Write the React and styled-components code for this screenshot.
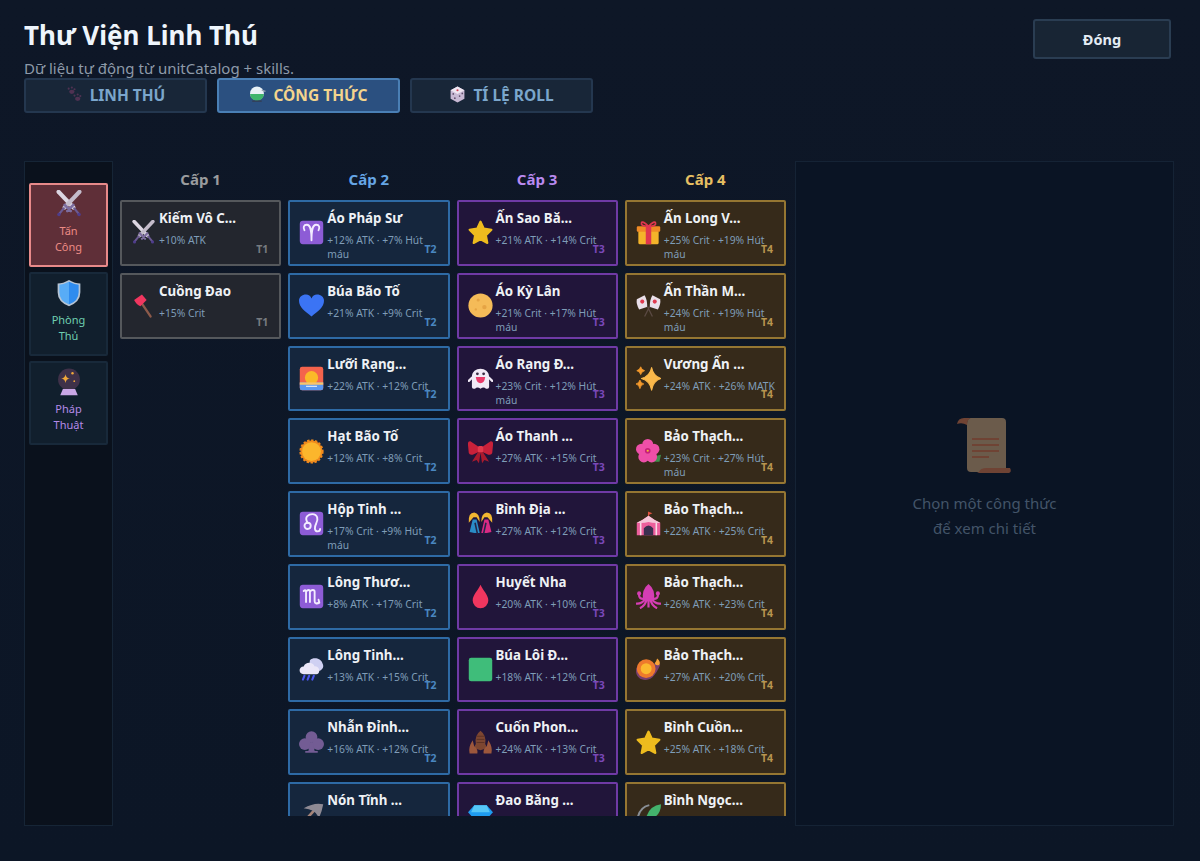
import React from "react";
import styled, { createGlobalStyle } from "styled-components";

const GlobalStyle = createGlobalStyle`
  html, body {
    margin: 0;
    height: 100%;
    background: #0d1626;
    font-family: "Noto Sans", "Open Sans", "Liberation Sans", sans-serif;
  }
  * { box-sizing: border-box; }
`;

const Page = styled.div`
  width: 1200px;
  height: 861px;
  padding: 18px 26px 35px 24px;
  display: flex;
  flex-direction: column;
  overflow: hidden;
  background: linear-gradient(180deg, #0e1727 0%, #0c1626 100%);
`;

const Header = styled.header`
  display: flex;
  justify-content: space-between;
  align-items: flex-start;
  padding-right: 3px;
`;

const Title = styled.h1`
  margin: 0;
  font-size: 26px;
  line-height: 34px;
  font-weight: 700;
  color: #eef5fc;
`;

const Subtitle = styled.p`
  margin: 6px 0 0;
  font-size: 15px;
  line-height: 20px;
  color: #8d9aa9;
`;

const CloseButton = styled.button`
  width: 138px;
  height: 40px;
  margin-top: 1px;
  padding-bottom: 2px;
  border: 2px solid #2a3d52;
  border-radius: 3px;
  background: #182534;
  color: #e4ecf4;
  font: 700 14.5px "Noto Sans", sans-serif;
`;

const Tabs = styled.nav`
  display: flex;
  gap: 10px;
`;

const Tab = styled.button`
  width: 183px;
  height: 35px;
  padding: 0 0 2px;
  display: flex;
  align-items: center;
  justify-content: center;
  gap: 7px;
  border: 2px solid ${(p) => (p.$active ? "#4a7fb5" : "#24374f")};
  border-radius: 3px;
  background: ${(p) => (p.$active ? "#2b5080" : "#182638")};
  color: ${(p) => (p.$active ? "#f4d58d" : "#7ba6cc")};
  font: 700 15.5px "Noto Sans", sans-serif;
  svg { width: 17px; height: 17px; }
`;

const Body = styled.main`
  flex: 1;
  min-height: 0;
  margin-top: 48px;
  display: flex;
  gap: 7px;
`;

const Sidebar = styled.aside`
  flex: 0 0 89px;
  display: flex;
  flex-direction: column;
  gap: 5.5px;
  padding: 21px 4px 0;
  border: 1px solid #162536;
  background: #0a111c;
`;

const SideItem = styled.button`
  height: 83.5px;
  padding: 5px 0 0;
  display: flex;
  flex-direction: column;
  align-items: center;
  border: 2px solid ${(p) => (p.$active ? "#e88a8a" : "#18293a")};
  border-radius: 2px;
  background: ${(p) => (p.$active ? "#5f2f38" : "#111f2d")};
  color: ${(p) => p.$color};
  font: 400 11px/16px "Noto Sans", sans-serif;
  svg { width: 28px; height: 28px; flex: none; }
  span { display: block; max-width: 44px; margin-top: 5px; }
`;

const Grid = styled.section`
  flex: 0 0 668px;
  display: grid;
  grid-template-columns: repeat(4, 161.25px);
  column-gap: 7px;
  height: 655px;
  overflow: hidden;
`;

const Column = styled.div`
  display: flex;
  flex-direction: column;
  gap: 7px;
`;

const ColumnTitle = styled.h3`
  margin: 0;
  height: 32px;
  padding-top: 7px;
  text-align: center;
  font-size: 15px;
  line-height: 22px;
  font-weight: 700;
  color: ${(p) => p.$color};
`;

const tiers = {
  1: { bg: "#23262e", border: "#55585c", badge: "#777b80", head: "#9a9c9e" },
  2: { bg: "#15263d", border: "#2e6aa5", badge: "#4a87c0", head: "#66a6e6" },
  3: { bg: "#21153a", border: "#6f3aa5", badge: "#7a48b8", head: "#b98af0" },
  4: { bg: "#362a1a", border: "#957632", badge: "#b8954f", head: "#e6bf62" },
};

const Card = styled.article`
  position: relative;
  flex: none;
  height: 65.75px;
  display: flex;
  align-items: center;
  gap: 3px;
  padding: 0 7px 0 9px;
  border: 2px solid ${(p) => tiers[p.$tier].border};
  border-radius: 2px;
  background: ${(p) => tiers[p.$tier].bg};
  svg { width: 25px; height: 25px; flex: none; }
`;

const CardText = styled.div`
  flex: 1;
  align-self: flex-start;
  padding-top: 6px;
  min-width: 0;
`;

const CardName = styled.div`
  font-size: 13.3px;
  line-height: 20px;
  font-weight: 700;
  color: #eef1f5;
  white-space: nowrap;
`;

const CardStat = styled.div`
  margin-top: 5px;
  font-size: 10.3px;
  line-height: 14px;
  color: #7f9db8;
`;

const Badge = styled.span`
  position: absolute;
  right: 11px;
  bottom: 8px;
  font-size: 10.5px;
  line-height: 14px;
  font-weight: 700;
  color: ${(p) => tiers[p.$tier].badge};
`;

const Detail = styled.aside`
  flex: 1;
  display: flex;
  flex-direction: column;
  align-items: center;
  padding-top: 255px;
  border: 1px solid #152335;
  background: #0a1424;
  svg { width: 56px; height: 60px; }
`;

const DetailHint = styled.p`
  margin: 14px 0 0;
  text-align: center;
  font-size: 15px;
  line-height: 25px;
  color: #435469;
`;

const Swords = () => (
  <svg viewBox="0 0 32 32">
    <g strokeLinecap="round" fill="none">
      <path d="M4 2 L21 20" stroke="#dcd6e2" strokeWidth="4.6" />
      <path d="M28 2 L11 20" stroke="#c4bccb" strokeWidth="4.6" />
      <path d="M22 21 L27 27 M10 21 L5 27" stroke="#6b5a92" strokeWidth="2.6" />
      <path d="M14 24 L21 17 M18 24 L11 17" stroke="#7d6d9f" strokeWidth="3" />
      <circle cx="27.5" cy="28" r="2" fill="#4f3d8c" />
      <circle cx="4.5" cy="28" r="2" fill="#4f3d8c" />
    </g>
  </svg>
);
const Axe = () => (
  <svg viewBox="0 0 32 32">
    <path d="M11 9 L25 30" stroke="#8d5a4a" strokeWidth="3" strokeLinecap="round" />
    <path d="M4 9 L14 2 L20 9 L12 17 Q7 15 4 9Z" fill="#f0365f" />
  </svg>
);
const Zodiac = ({ d, children }) => (
  <svg viewBox="0 0 32 32">
    <rect x="1" y="1" width="30" height="30" rx="4" fill="#8d5cd6" />
    <path d={d} fill="none" stroke="#f3ecff" strokeWidth="2.4" strokeLinecap="round" />
    {children}
  </svg>
);
const Aries = () => <Zodiac d="M16 26 C16 13 15 6 10 6 C6 6 5 10 7 13 M16 26 C16 13 17 6 22 6 C26 6 27 10 25 13" />;
const Leo = () => (
  <Zodiac d="M11 15 C6 7 13 4 17 4 C24 4 25 11 22 16 C20 20 19 26 24 26 C26 26 27 25 27 23">
    <circle cx="11" cy="19" r="4" fill="none" stroke="#f3ecff" strokeWidth="2.4" />
  </Zodiac>
);
const Scorpio = () => <Zodiac d="M6 9 C8 7 9 8 9 10 V23 M9 10 C11 7 14 7 14 10 V23 M14 10 C16 7 20 7 20 10 V22 C20 25 23 26 26 24 M26 24 L25 20 M26 24 L22 25" />;
const Heart = () => (
  <svg viewBox="0 0 32 32">
    <path d="M16 30 C8 24 0 18 0 10 C0 5 4 2 9 2 C12 2 15 4 16 7 C17 4 20 2 23 2 C28 2 32 5 32 10 C32 18 24 24 16 30Z" fill="#3b74f4" />
  </svg>
);
const Sunrise = () => (
  <svg viewBox="0 0 32 32">
    <rect x="1" y="1" width="30" height="30" rx="3" fill="#f4634c" />
    <path d="M1 21 H31 V28 Q31 31 28 31 H4 Q1 31 1 28Z" fill="#5b97ee" />
    <circle cx="16" cy="15" r="8.5" fill="#fbb928" />
    <rect x="1" y="21" width="30" height="3" fill="#f9c46b" />
    <path d="M9 26 H23" stroke="#e9f2fb" strokeWidth="1.4" />
  </svg>
);
const Sun = () => (
  <svg viewBox="0 0 32 32">
    <circle cx="16" cy="16" r="14" fill="#f08a1d" strokeDasharray="3 2" stroke="#f08a1d" strokeWidth="3" />
    <circle cx="16" cy="16" r="12" fill="#fbb62c" />
  </svg>
);
const RainCloud = () => (
  <svg viewBox="0 0 32 32">
    <path d="M14 4 C18 0 28 1 30 8 C33 13 29 18 24 18 H12Z" fill="#cfd0f2" />
    <path d="M6 22 C-1 22 -1 12 6 12 C8 6 18 6 20 12 C27 11 28 22 22 22Z" fill="#ebe7f8" />
    <path d="M7 24 L5 29 M13 24 L11 29 M19 24 L17 29" stroke="#4a55ec" strokeWidth="2.6" strokeLinecap="round" />
  </svg>
);
const Club = () => (
  <svg viewBox="0 0 32 32">
    <g fill="#735c94">
      <circle cx="16" cy="9" r="7.5" />
      <circle cx="7.5" cy="18" r="7.5" />
      <circle cx="24.5" cy="18" r="7.5" />
      <path d="M14 16 H18 L20 27 H24 V29 H8 V27 H12Z" />
    </g>
  </svg>
);
const Pick = () => (
  <svg viewBox="0 0 32 32">
    <path d="M3 29 L20 10" stroke="#a58478" strokeWidth="3.4" strokeLinecap="round" />
    <path d="M6 8 Q20 0 31 3 Q29 14 25 21 Q23 10 6 8Z" fill="#8e8a94" />
  </svg>
);
const Star = () => (
  <svg viewBox="0 0 32 32">
    <path d="M16 2 L20.3 11 L30 12.5 L23 19.6 L24.8 29.5 L16 24.8 L7.2 29.5 L9 19.6 L2 12.5 L11.7 11Z" fill="#eebc1e" stroke="#eebc1e" strokeWidth="2.6" strokeLinejoin="round" />
  </svg>
);
const Moon = () => (
  <svg viewBox="0 0 32 32">
    <circle cx="16" cy="16" r="15.5" fill="#f5bb58" />
    <circle cx="13" cy="9" r="2" fill="#e6a444" />
    <circle cx="21" cy="18" r="2.8" fill="#e6a444" />
    <circle cx="10" cy="21" r="1.5" fill="#e6a444" />
  </svg>
);
const Ghost = () => (
  <svg viewBox="0 0 32 32">
    <path d="M5 14 C5 0 27 0 27 14 V27 Q27 30 23 29 Q20 26 16 29 Q12 26 9 29 Q5 30 5 27Z" fill="#f1e9f6" />
    <path d="M5 15 L1 19 M27 15 L31 19" stroke="#f1e9f6" strokeWidth="3" strokeLinecap="round" />
    <circle cx="12" cy="10" r="1.8" fill="#3a2b44" />
    <circle cx="20" cy="10" r="1.8" fill="#3a2b44" />
    <path d="M10 14 H22 Q21 22 16 22 Q11 22 10 14Z" fill="#e93a6a" />
  </svg>
);
const Bow = () => (
  <svg viewBox="0 0 32 32">
    <path d="M15 11 L3 3 Q-1 3 0 8 L1 18 Q2 21 6 20 L15 16Z M17 11 L29 3 Q33 3 32 8 L31 18 Q30 21 26 20 L17 16Z" fill="#c9213a" />
    <path d="M14 15 L5 29 L11 27 L14 31 L16 18 L18 31 L21 27 L27 29 L18 15Z" fill="#a81a2e" />
    <rect x="12.5" y="9" width="7" height="8" rx="2" fill="#e23a4c" />
  </svg>
);
const Dancers = () => (
  <svg viewBox="0 0 32 32">
    <path d="M1 15 Q0 2 8 2 Q15 3 15 14 L11 8 H7Z" fill="#f2b731" />
    <path d="M17 14 Q17 3 24 2 Q32 2 31 15 L25 8 H21Z" fill="#f2b731" />
    <path d="M6 11 L11 11 L15 28 H8 L2 27Z" fill="#2a8cc7" />
    <path d="M21 11 L26 11 L30 27 L24 28 H17Z" fill="#d92a84" />
    <path d="M9 15 L12 29 M23 15 L20 29" stroke="#22264a" strokeWidth="2" />
  </svg>
);
const Drop = () => (
  <svg viewBox="0 0 32 32">
    <path d="M16 1 C19 8 26 14 26 21 A10 10 0 0 1 6 21 C6 14 13 8 16 1Z" fill="#f0365f" />
  </svg>
);
const GreenSquare = () => (
  <svg viewBox="0 0 32 32">
    <rect x="1" y="1" width="30" height="30" rx="3" fill="#3fbd7a" />
  </svg>
);
const Lobster = () => (
  <svg viewBox="0 0 32 32">
    <path d="M16 1 Q24 7 22 18 L25 23 L16 26 L7 23 L10 18 Q8 7 16 1Z" fill="#7d4631" />
    <path d="M6 13 Q0 22 2 30 H12 Q13 24 8 21Z M26 13 Q32 22 30 30 H20 Q19 24 24 21Z" fill="#9c573c" />
    <path d="M11 8 H21 M11 12 H21 M11 16 H21" stroke="#5c3224" strokeWidth="1.2" />
  </svg>
);
const Gem = () => (
  <svg viewBox="0 0 32 32">
    <path d="M8 4 H24 L32 13 L16 31 L0 13Z" fill="#1e9bf0" />
    <path d="M8 4 H24 L28 13 H4Z" fill="#56c6f7" />
  </svg>
);
const Gift = () => (
  <svg viewBox="0 0 32 32">
    <rect x="3" y="13" width="26" height="18" rx="2" fill="#f4b42a" />
    <rect x="1" y="8" width="30" height="7" rx="1.5" fill="#f08b25" />
    <rect x="12.5" y="8" width="7" height="23" fill="#e0364e" />
    <path d="M16 8 Q8 0 7 4 Q6 8 16 8 Q26 8 25 4 Q24 0 16 8Z" fill="none" stroke="#e0364e" strokeWidth="2.2" />
  </svg>
);
const Flags = () => (
  <svg viewBox="0 0 32 32">
    <path d="M11 30 L20 12 M21 30 L12 12" stroke="#5b4a44" strokeWidth="1.6" />
    <path d="M14 18 L4 21 Q0 14 1 8 L11 3 Q15 10 14 18Z" fill="#e9dfe9" />
    <path d="M18 18 L28 21 Q32 14 31 8 L21 3 Q17 10 18 18Z" fill="#e9dfe9" />
    <circle cx="8" cy="11" r="2.6" fill="#df3a50" />
    <circle cx="24" cy="11" r="2.6" fill="#df3a50" />
  </svg>
);
const Sparkles = () => (
  <svg viewBox="0 0 32 32">
    <path d="M20 2 Q22 13 32 16 Q22 19 20 31 Q18 19 7 16 Q18 13 20 2Z" fill="#fbb84a" stroke="#fbb84a" strokeWidth="1.4" strokeLinejoin="round" />
    <path d="M6 1 Q7 5 11 6 Q7 7 6 11 Q5 7 1 6 Q5 5 6 1Z" fill="#f59a2c" stroke="#f59a2c" strokeLinejoin="round" />
    <path d="M5 18 Q6 22 10 23 Q6 24 5 29 Q4 24 0 23 Q4 22 5 18Z" fill="#f59a2c" stroke="#f59a2c" strokeLinejoin="round" />
  </svg>
);
const Hibiscus = () => (
  <svg viewBox="0 0 32 32">
    <path d="M24 22 L32 20 L30 29 L22 29Z" fill="#3f8f4d" />
    <g fill="#ee4fa8">
      <circle cx="15" cy="7" r="7" />
      <circle cx="7" cy="13" r="7" />
      <circle cx="23" cy="13" r="7" />
      <circle cx="10" cy="23" r="7" />
      <circle cx="20" cy="23" r="7" />
    </g>
    <circle cx="15" cy="15" r="3.6" fill="#c61f7c" />
    <circle cx="15" cy="15" r="1.4" fill="#f7b733" />
  </svg>
);
const Tent = () => (
  <svg viewBox="0 0 32 32">
    <path d="M16 1 V7" stroke="#d9513e" strokeWidth="1.4" />
    <path d="M16 1 L21 3 L16 5Z" fill="#e4533f" />
    <path d="M16 6 Q8 12 1 15 V31 H31 V15 Q24 12 16 6Z" fill="#ec5f9c" />
    <path d="M1 15 Q8 12 16 6 Q24 12 31 15 Q23 16 16 14 Q9 16 1 15Z" fill="#f4c6d8" />
    <path d="M10 31 V22 Q16 15 22 22 V31Z" fill="#3b2f50" />
    <path d="M6 15 V31 M26 15 V31" stroke="#f7dbe6" strokeWidth="2" />
  </svg>
);
const Squid = () => (
  <svg viewBox="0 0 32 32">
    <path d="M16 0 Q25 7 23 20 H9 Q7 7 16 0Z" fill="#d63eb4" />
    <circle cx="4" cy="12" r="2.6" fill="#d63eb4" />
    <circle cx="28" cy="12" r="2.6" fill="#d63eb4" />
    <path d="M11 19 Q3 20 4 12 M21 19 Q29 20 28 12 M12 19 Q7 26 0 25 M20 19 Q25 26 32 25 M14 19 Q12 28 5 31 M18 19 Q20 28 27 31 M16 19 V30" fill="none" stroke="#d63eb4" strokeWidth="2.8" />
  </svg>
);
const Comet = () => (
  <svg viewBox="0 0 32 32">
    <path d="M31 10 Q27 20 21 26 C13 33 0 29 0 18 C0 9 10 5 18 7 Q23 8 31 10Z" fill="#7a3f6e" />
    <circle cx="13" cy="15" r="12" fill="#ee7a2c" />
    <circle cx="13" cy="15" r="7" fill="#fbb92f" />
    <path d="M27 2 Q32 6 30 10 Q25 12 24 8 Q26 6 27 2Z" fill="#f6a23a" />
  </svg>
);
const Recycle = () => (
  <svg viewBox="0 0 32 32">
    <path d="M2 22 Q4 7 17 4" fill="none" stroke="#8a8f96" strokeWidth="2.6" />
    <path d="M13 20 Q17 5 32 3 Q32 17 19 22Z" fill="#43b26c" />
    <path d="M4 28 Q16 32 26 24" fill="none" stroke="#43b26c" strokeWidth="3" />
  </svg>
);
const Shield = () => (
  <svg viewBox="0 0 32 32">
    <path d="M16 1 Q23 5 29 5 V15 Q29 26 16 31 Q3 26 3 15 V5 Q9 5 16 1Z" fill="#b6c4d4" />
    <path d="M16 3 Q22 6 27 6.5 V15 Q27 25 16 29Z" fill="#2f8cef" />
    <path d="M16 3 Q10 6 5 6.5 V15 Q5 25 16 29Z" fill="#58acf6" />
  </svg>
);
const CrystalBall = () => (
  <svg viewBox="0 0 32 32">
    <circle cx="16" cy="13" r="12.5" fill="#3f3149" />
    <path d="M12 7 Q12.6 11.4 17 12 Q12.6 12.6 12 17 Q11.4 12.6 7 12 Q11.4 11.4 12 7Z" fill="#f3a93a" />
    <circle cx="20" cy="6" r="1.4" fill="#f3a93a" />
    <circle cx="22" cy="15" r="1" fill="#f3a93a" />
    <path d="M9 24 H23 L26 31 H6Z" fill="#c9a7e6" />
  </svg>
);
const Paw = () => (
  <svg viewBox="0 0 32 32">
    <g fill="#4f3252">
      <ellipse cx="11" cy="11" rx="5" ry="4" />
      <circle cx="5" cy="5" r="2" />
      <circle cx="11" cy="3" r="2" />
      <circle cx="16" cy="6" r="2" />
      <ellipse cx="22" cy="24" rx="5" ry="4" />
      <circle cx="16" cy="18" r="2" />
      <circle cx="22" cy="16" r="2" />
      <circle cx="27" cy="19" r="2" />
    </g>
  </svg>
);
const Flask = () => (
  <svg viewBox="0 0 32 32">
    <circle cx="15" cy="14" r="13" fill="#e8f1f6" />
    <path d="M2 15 H28 A13 13 0 0 1 2 15Z" fill="#3fb56c" />
    <path d="M6 27 H24 V30 H6Z" fill="#33405a" />
    <path d="M24 8 L31 10" stroke="#9aa7b3" strokeWidth="2.4" />
  </svg>
);
const Dice = () => (
  <svg viewBox="0 0 32 32">
    <path d="M16 1 L29 8 V24 L16 31 L3 24 V8Z" fill="#c8b9d4" />
    <path d="M16 1 L29 8 L16 15 L3 8Z" fill="#efe6f1" />
    <circle cx="16" cy="8" r="2" fill="#d33f55" />
    <circle cx="8" cy="15" r="1.6" fill="#5c4b68" />
    <circle cx="11" cy="23" r="1.6" fill="#5c4b68" />
    <circle cx="20" cy="19" r="1.6" fill="#5c4b68" />
    <circle cx="25" cy="14" r="1.6" fill="#5c4b68" />
  </svg>
);
const Scroll = () => (
  <svg viewBox="0 0 56 60">
    <path d="M13 1 H45 Q49 1 49 5 V55 H14 Q10 55 10 51 V7 Q10 2 13 1Z" fill="#6b5b4b" />
    <path d="M0 7 Q1 1 7 1 H14 Q10 2 10 8 Q5 5 0 7Z" fill="#6f4334" />
    <path d="M22 55 Q23 51 30 51 H53 Q55 55 52 56 H20Z" fill="#6f4334" />
    <path d="M15 22 H42 M15 28 H42 M15 34 H42 M15 40 H32" stroke="#6f4334" strokeWidth="2.2" />
  </svg>
);

const columns = [
  {
    tier: 1,
    items: [
      [Swords, "Kiếm Vô C...", "+10% ATK"],
      [Axe, "Cuồng Đao", "+15% Crit"],
    ],
  },
  {
    tier: 2,
    items: [
      [Aries, "Áo Pháp Sư", "+12% ATK · +7% Hút máu"],
      [Heart, "Búa Bão Tố", "+21% ATK · +9% Crit"],
      [Sunrise, "Lưỡi Rạng...", "+22% ATK · +12% Crit"],
      [Sun, "Hạt Bão Tố", "+12% ATK · +8% Crit"],
      [Leo, "Hộp Tinh ...", "+17% Crit · +9% Hút máu"],
      [Scorpio, "Lông Thươ...", "+8% ATK · +17% Crit"],
      [RainCloud, "Lông Tinh...", "+13% ATK · +15% Crit"],
      [Club, "Nhẫn Đỉnh...", "+16% ATK · +12% Crit"],
      [Pick, "Nón Tĩnh ..."],
    ],
  },
  {
    tier: 3,
    items: [
      [Star, "Ấn Sao Bă...", "+21% ATK · +14% Crit"],
      [Moon, "Áo Kỳ Lân", "+21% Crit · +17% Hút máu"],
      [Ghost, "Áo Rạng Đ...", "+23% Crit · +12% Hút máu"],
      [Bow, "Áo Thanh ...", "+27% ATK · +15% Crit"],
      [Dancers, "Bình Địa ...", "+27% ATK · +12% Crit"],
      [Drop, "Huyết Nha", "+20% ATK · +10% Crit"],
      [GreenSquare, "Búa Lôi Đ...", "+18% ATK · +12% Crit"],
      [Lobster, "Cuốn Phon...", "+24% ATK · +13% Crit"],
      [Gem, "Đao Băng ..."],
    ],
  },
  {
    tier: 4,
    items: [
      [Gift, "Ấn Long V...", "+25% Crit · +19% Hút máu"],
      [Flags, "Ấn Thần M...", "+24% Crit · +19% Hút máu"],
      [Sparkles, "Vương Ấn ...", "+24% ATK · +26% MATK"],
      [Hibiscus, "Bảo Thạch...", "+23% Crit · +27% Hút máu"],
      [Tent, "Bảo Thạch...", "+22% ATK · +25% Crit"],
      [Squid, "Bảo Thạch...", "+26% ATK · +23% Crit"],
      [Comet, "Bảo Thạch...", "+27% ATK · +20% Crit"],
      [Star, "Bình Cuồn...", "+25% ATK · +18% Crit"],
      [Recycle, "Bình Ngọc..."],
    ],
  },
];

const sideItems = [
  { Icon: Swords, label: "Tấn Công", color: "#ed8b85", active: true },
  { Icon: Shield, label: "Phòng Thủ", color: "#6fcfb0" },
  { Icon: CrystalBall, label: "Pháp Thuật", color: "#b48ae8" },
];

export default function App() {
  return (
    <Page>
      <GlobalStyle />
      <Header>
        <div>
          <Title>Thư Viện Linh Thú</Title>
          <Subtitle>Dữ liệu tự động từ unitCatalog + skills.</Subtitle>
        </div>
        <CloseButton>Đóng</CloseButton>
      </Header>
      <Tabs>
        <Tab><Paw /> LINH THÚ</Tab>
        <Tab $active><Flask /> CÔNG THỨC</Tab>
        <Tab><Dice /> TÍ LỆ ROLL</Tab>
      </Tabs>
      <Body>
        <Sidebar>
          {sideItems.map(({ Icon, label, color, active }) => (
            <SideItem key={label} $color={color} $active={active}>
              <Icon />
              <span>{label}</span>
            </SideItem>
          ))}
        </Sidebar>
        <Grid>
          {columns.map(({ tier, items }) => (
            <Column key={tier}>
              <ColumnTitle $color={tiers[tier].head}>Cấp {tier}</ColumnTitle>
              {items.map(([Icon, name, stat], i) => (
                <Card key={i} $tier={tier}>
                  <Icon />
                  <CardText>
                    <CardName>{name}</CardName>
                    {stat && <CardStat>{stat}</CardStat>}
                  </CardText>
                  <Badge $tier={tier}>T{tier}</Badge>
                </Card>
              ))}
            </Column>
          ))}
        </Grid>
        <Detail>
          <Scroll />
          <DetailHint>
            Chọn một công thức
            <br />
            để xem chi tiết
          </DetailHint>
        </Detail>
      </Body>
    </Page>
  );
}
